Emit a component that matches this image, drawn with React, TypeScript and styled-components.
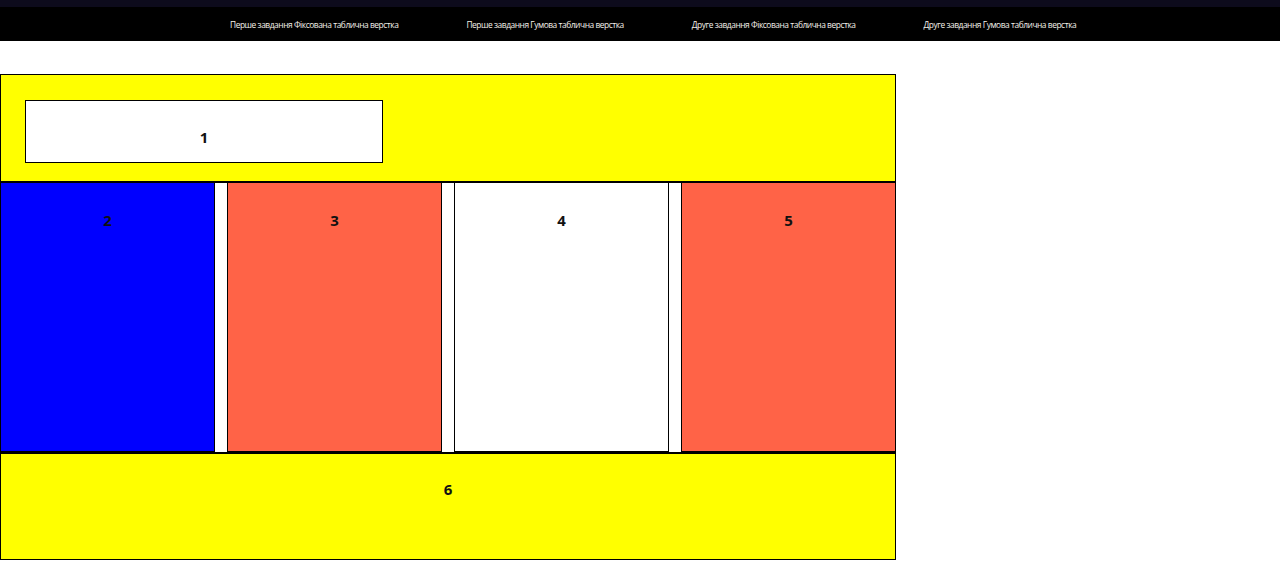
import React from "react";
import styled, { createGlobalStyle } from "styled-components";

const Global = createGlobalStyle`
  html, body { margin: 0; padding: 0; background: #fff; }
  body { font-family: "Open Sans", "Noto Sans", sans-serif; }
  * { box-sizing: border-box; }
`;

const Nav = styled.nav`
  height: 41px;
  background: #000;
  border-top: 7px solid #0d0b1c;
  display: flex;
  align-items: center;
  padding-left: 230px;
  gap: 68px;
`;

const NavLink = styled.a`
  color: #f4f1ea;
  font-family: "Open Sans", sans-serif;
  font-size: 8.4px;
  letter-spacing: -0.45px;
  padding-top: 1px;
  text-decoration: none;
  white-space: nowrap;
`;

const Layout = styled.div`
  width: 896px;
  margin-top: 33px;
  display: flex;
  flex-direction: column;
`;

const Header = styled.header`
  height: 109px;
  background: #ffff00;
  border: 1px solid #000;
  border-bottom-width: 2px;
  padding: 25px 0 0 24px;
`;

const Number = styled.div`
  font-weight: 700;
  font-size: 15px;
  line-height: 20px;
  color: #111;
  text-align: center;
`;

const HeadBox = styled.div`
  width: 358px;
  height: 63px;
  background: #fff;
  border: 1.5px solid #000;
  padding-top: 26px;
`;

const Row = styled.div`
  display: grid;
  grid-template-columns: repeat(4, 215px);
  column-gap: 12px;
  height: 269px;
`;

const Cell = styled.div<{ $bg: string }>`
  background: ${(p) => p.$bg};
  border: 1px solid #000;
  border-top: none;
  padding-top: 27px;
`;

const Footer = styled.footer`
  height: 108px;
  background: #ffff00;
  border: 1px solid #000;
  border-top-width: 2px;
  padding-top: 25px;
`;

const links = [
  "Перше завдання Фіксована таблична верстка",
  "Перше завдання Гумова таблична верстка",
  "Друге завдання Фіксована таблична верстка",
  "Друге завдання Гумова таблична верстка",
];

const cells = [
  { n: "2", bg: "#0000ff" },
  { n: "3", bg: "#ff6347" },
  { n: "4", bg: "#ffffff" },
  { n: "5", bg: "#ff6347" },
];

export default function App() {
  return (
    <>
      <Global />
      <Nav>
        {links.map((l) => (
          <NavLink key={l} href="#">
            {l}
          </NavLink>
        ))}
      </Nav>
      <Layout>
        <Header>
          <HeadBox>
            <Number>1</Number>
          </HeadBox>
        </Header>
        <Row>
          {cells.map((c) => (
            <Cell key={c.n} $bg={c.bg}>
              <Number>{c.n}</Number>
            </Cell>
          ))}
        </Row>
        <Footer>
          <Number>6</Number>
        </Footer>
      </Layout>
    </>
  );
}
